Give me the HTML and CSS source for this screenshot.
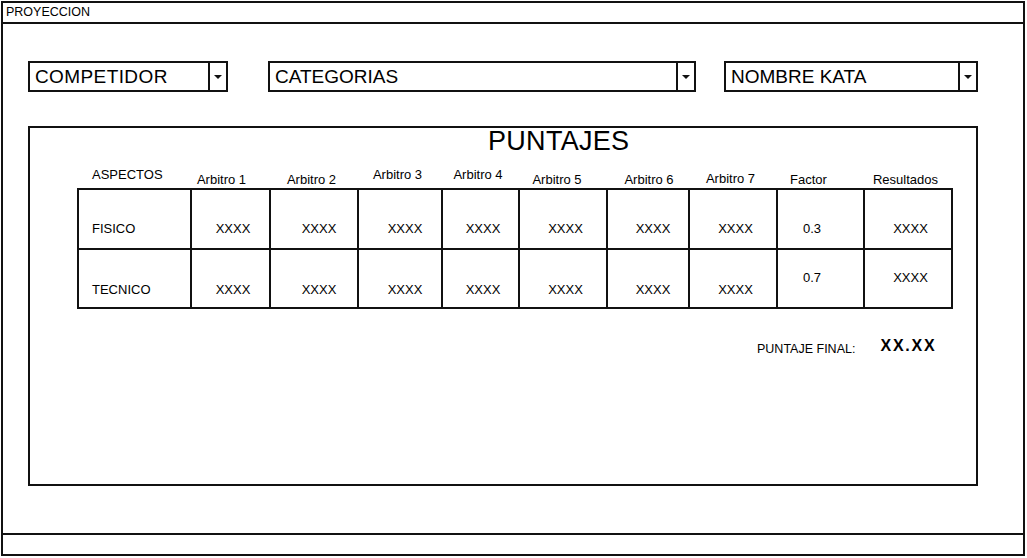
FILE: index.html
```html
<!DOCTYPE html>
<html lang="es">
<head>
<meta charset="utf-8">
<title>PROYECCION</title>
<link rel="stylesheet" href="styles.css">
</head>
<body>
<div class="window">
  <div class="titlebar">PROYECCION</div>
  <div class="content">
    <div class="selects">
      <div class="select sel-comp"><span class="sel-text">COMPETIDOR</span><span class="sel-btn"><span class="arrow"></span></span></div>
      <div class="select sel-cat"><span class="sel-text">CATEGORIAS</span><span class="sel-btn"><span class="arrow"></span></span></div>
      <div class="select sel-kata"><span class="sel-text">NOMBRE KATA</span><span class="sel-btn"><span class="arrow"></span></span></div>
    </div>
    <div class="panel">
      <div class="panel-title">PUNTAJES</div>
      <div class="grid head">
        <div class="h h-left h-up">ASPECTOS</div>
        <div class="h h-a1">Arbitro 1</div>
        <div class="h">Arbitro 2</div>
        <div class="h h-up">Arbitro 3</div>
        <div class="h h-up">Arbitro 4</div>
        <div class="h h-a5">Arbitro 5</div>
        <div class="h h-a6">Arbitro 6</div>
        <div class="h h-mid">Arbitro 7</div>
        <div class="h h-left h-factor">Factor</div>
        <div class="h">Resultados</div>
      </div>
      <div class="grid body">
        <div class="c c-label">FISICO</div>
        <div class="c">XXXX</div>
        <div class="c c-r">XXXX</div>
        <div class="c c-r">XXXX</div>
        <div class="c">XXXX</div>
        <div class="c">XXXX</div>
        <div class="c c-r">XXXX</div>
        <div class="c">XXXX</div>
        <div class="c c-factor">0.3</div>
        <div class="c">XXXX</div>

        <div class="c c-label c-low">TECNICO</div>
        <div class="c c-low">XXXX</div>
        <div class="c c-r c-low">XXXX</div>
        <div class="c c-r c-low">XXXX</div>
        <div class="c c-low">XXXX</div>
        <div class="c c-low">XXXX</div>
        <div class="c c-r c-low">XXXX</div>
        <div class="c c-low">XXXX</div>
        <div class="c c-factor c-high">0.7</div>
        <div class="c c-high">XXXX</div>
      </div>
      <div class="final">
        <span class="final-label">PUNTAJE FINAL:</span>
        <span class="final-value">XX.XX</span>
      </div>
    </div>
  </div>
  <div class="statusbar"></div>
</div>
</body>
</html>
```

FILE: styles.css
```css
* { box-sizing: border-box; }

html, body {
  margin: 0;
  padding: 0;
  background: #fff;
}

body {
  font-family: "Liberation Sans", Arial, sans-serif;
  color: #000;
}

.window {
  margin: 1px 0 0 1px;
  width: 1024px;
  height: 555px;
  border: 2px solid #111;
  display: flex;
  flex-direction: column;
}

.titlebar {
  height: 21px;
  border-bottom: 2px solid #111;
  font-size: 12.5px;
  line-height: 19px;
  padding-left: 3px;
}

.content {
  flex: 1;
  padding: 37px 0 0 25px;
}

.statusbar {
  height: 21px;
  border-top: 2px solid #111;
}

/* dropdowns */
.selects {
  display: flex;
  height: 31px;
}

.select {
  display: flex;
  height: 31px;
  border: 2px solid #111;
  background: #fff;
}

.sel-comp { width: 200px; }
.sel-cat { width: 428px; margin-left: 40px; }
.sel-kata { width: 254px; margin-left: 28px; }

.sel-text {
  flex: 1;
  font-size: 19px;
  line-height: 27px;
  padding-left: 5px;
  white-space: nowrap;
}

.sel-comp .sel-text { letter-spacing: 0.4px; }

.sel-btn {
  width: 18px;
  border-left: 2px solid #111;
  display: flex;
  align-items: center;
  justify-content: center;
}

.arrow {
  width: 0;
  height: 0;
  border-left: 4px solid transparent;
  border-right: 4px solid transparent;
  border-top: 4px solid #111;
  margin-top: 1px;
}

/* panel */
.panel {
  margin-top: 34px;
  width: 950px;
  height: 360px;
  border: 2px solid #111;
}

.panel-title {
  font-size: 27px;
  line-height: 26px;
  padding-left: 458px;
  letter-spacing: 0.3px;
}

.grid {
  display: grid;
  grid-template-columns: 111px 77px 86px 82px 75px 86px 80px 86px 85px 86px;
  column-gap: 2px;
  margin-left: 47px;
  width: 876px;
}

.head {
  margin-top: 12px;
  height: 22px;
  padding: 0 2px;
}

.h {
  font-size: 13px;
  line-height: 14px;
  text-align: center;
  align-self: end;
  padding-bottom: 1px;
  padding-right: 5px;
  white-space: nowrap;
}

.h-a1 { padding-right: 18px; }
.h-a5 { padding-right: 12px; }
.h-a6 { padding-right: 0; padding-left: 2px; }
.h-up { align-self: start; padding-top: 2px; padding-bottom: 0; }
.h-mid { padding-bottom: 2px; }
.h-left { text-align: left; padding-left: 13px; padding-right: 0; }
.h-factor { padding-left: 12px; }

.body {
  background: #111;
  border: 2px solid #111;
  row-gap: 2px;
  grid-template-rows: 58px 57px;
}

.c {
  background: #fff;
  font-size: 13px;
  line-height: 14px;
  display: flex;
  align-items: flex-end;
  justify-content: center;
  padding-bottom: 12px;
  padding-left: 5px;
}

.c-r { padding-left: 10px; }

.c-label {
  justify-content: flex-start;
  padding-left: 13px;
}

.c-factor {
  justify-content: flex-start;
  padding-left: 25px;
}

.c-low { padding-bottom: 10px; }
.c-high { padding-bottom: 22px; }

.final {
  display: flex;
  align-items: flex-start;
  margin-top: 29px;
  padding-left: 727px;
}

.final-label {
  font-size: 12.5px;
  line-height: 14px;
  margin-top: 4px;
}

.final-value {
  margin-left: 25px;
  font-size: 16px;
  font-weight: bold;
  line-height: 16px;
  letter-spacing: 1.8px;
}
```
